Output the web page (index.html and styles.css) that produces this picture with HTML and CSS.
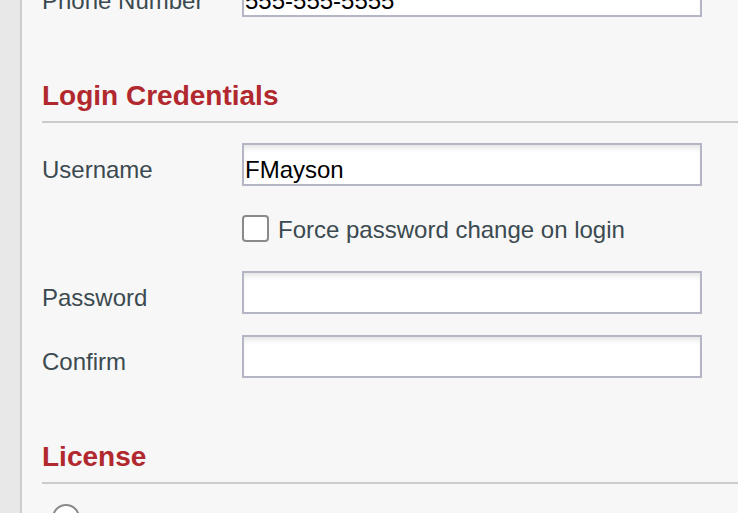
FILE: index.html
```html
<!DOCTYPE html>
<html lang="en">
<head>
<meta charset="utf-8">
<title>User Form</title>
<link rel="stylesheet" href="styles.css">
</head>
<body>
<div class="page">
  <aside class="sidebar"></aside>
  <main class="main">
    <div class="row">
      <label class="label" for="phone">Phone Number</label>
      <input class="field" id="phone" type="text" value="555-555-5555">
    </div>

    <h2 class="section-title">Login Credentials</h2>
    <div class="row">
      <label class="label" for="username">Username</label>
      <input class="field" id="username" type="text" value="FMayson">
    </div>
    <div class="row row-check">
      <span class="label"></span>
      <label class="check">
        <input class="checkbox" type="checkbox">
        <span class="check-text">Force password change on login</span>
      </label>
    </div>
    <div class="row">
      <label class="label" for="password">Password</label>
      <input class="field" id="password" type="password">
    </div>
    <div class="row">
      <label class="label" for="confirm">Confirm</label>
      <input class="field" id="confirm" type="password">
    </div>

    <h2 class="section-title">License</h2>
    <div class="radio-row">
      <input class="radio" type="radio" name="license">
    </div>
  </main>
</div>
</body>
</html>
```

FILE: styles.css
```css
html, body {
  margin: 0;
  padding: 0;
  height: 100%;
  overflow: hidden;
}

body {
  background: #f7f7f7;
  font-family: "Liberation Sans", Arial, sans-serif;
  font-size: 24px;
  color: #3b4a50;
}

.page {
  display: flex;
  min-height: 100vh;
}

.sidebar {
  width: 20px;
  flex: none;
  background: #e8e8e8;
  border-right: 2px solid #cdcdcd;
}

.main {
  flex: 1;
  padding-left: 20px;
  margin-top: -26px;
}

.row {
  display: flex;
  align-items: baseline;
  height: 43px;
  margin-bottom: 21px;
}

.row-check {
  align-items: center;
}

.label {
  width: 200px;
  flex: none;
  color: #3b4a50;
}

.field {
  box-sizing: border-box;
  width: 460px;
  height: 43px;
  margin: 0;
  padding: 11px 4px 1px 1px;
  border: 2px solid #b4b6c6;
  border-radius: 0;
  background: #fff;
  box-shadow: inset 0 5px 6px -3px rgba(0, 0, 0, 0.13);
  font-family: "Liberation Sans", Arial, sans-serif;
  font-size: 24px;
  color: #000;
  outline: none;
}

.check {
  display: flex;
  align-items: center;
  gap: 9px;
  color: #3b4a50;
}

.check-text {
  padding-top: 2px;
}

.checkbox {
  appearance: none;
  -webkit-appearance: none;
  box-sizing: border-box;
  width: 27px;
  height: 27px;
  margin: 0;
  border: 2px solid #8a8a8a;
  border-radius: 4px;
  background: #fff;
}

.section-title {
  margin: 63px 0 20px;
  padding-bottom: 9px;
  border-bottom: 2px solid #cccccc;
  font-size: 28px;
  line-height: 32px;
  font-weight: bold;
  color: #b1282e;
}

.radio-row {
  display: flex;
  padding-left: 10px;
}

.radio {
  appearance: none;
  -webkit-appearance: none;
  box-sizing: border-box;
  width: 28px;
  height: 28px;
  margin: 0;
  border: 2px solid #8a8a8a;
  border-radius: 50%;
  background: #fff;
}
```
